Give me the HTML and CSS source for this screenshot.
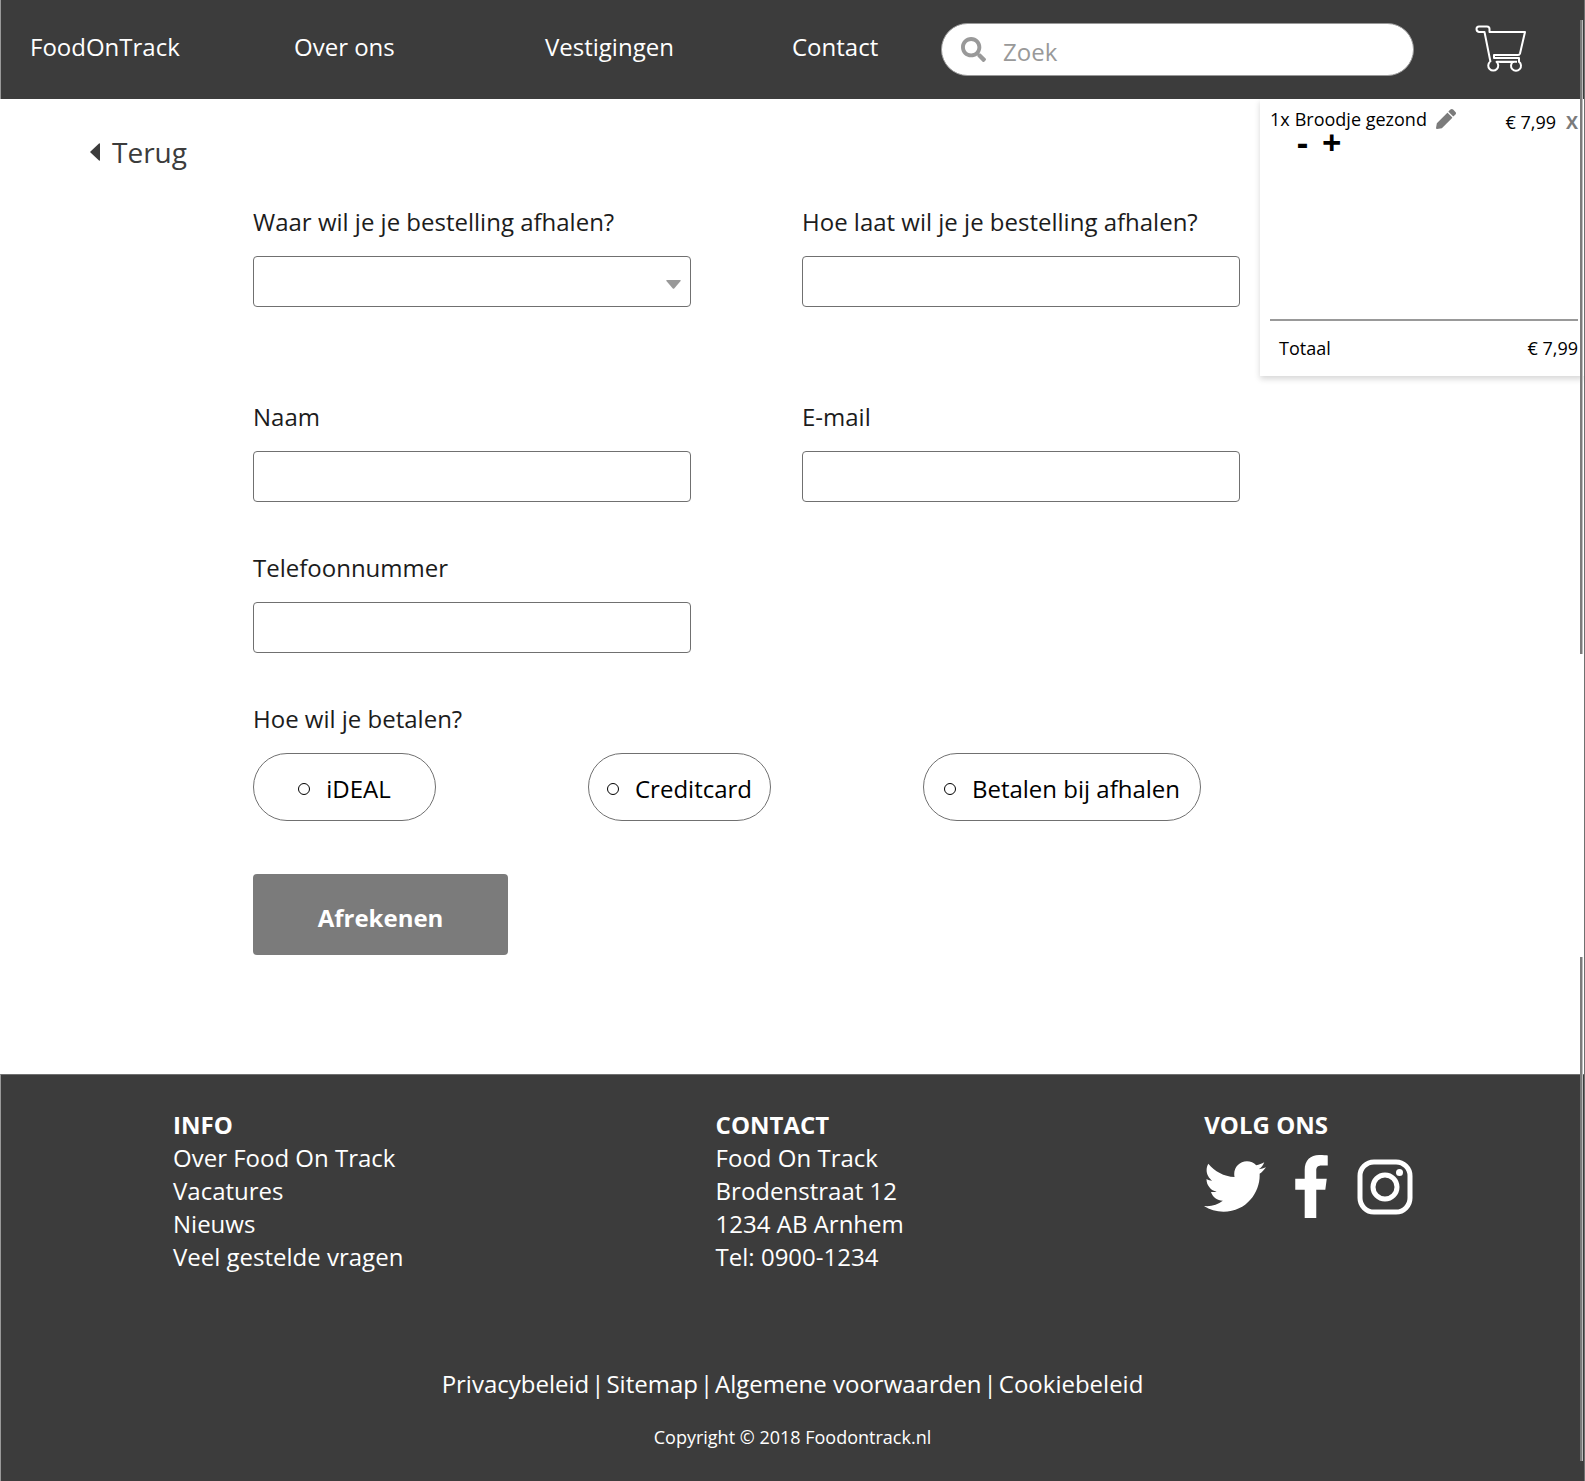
FILE: index.html
```html
<!DOCTYPE html>
<html lang="nl">
<head>
  <meta charset="utf-8">
  <meta name="viewport" content="width=device-width, initial-scale=1">
  <title>FoodOnTrack</title>
  <link rel="stylesheet" href="styles.css">
</head>
<body>
  <div class="page">
    <header class="header">
      <nav class="nav" aria-label="Hoofdmenu">
        <a href="#">FoodOnTrack</a>
        <a href="#">Over ons</a>
        <a href="#">Vestigingen</a>
        <a href="#">Contact</a>
      </nav>
      <form class="search" role="search">
        <svg class="search-icon" viewBox="0 0 512 512" aria-hidden="true"><path d="M505 442.700L405.300 343c-4.500-4.500-10.600-7-17-7H372c27.600-35.300 44-79.700 44-128C416 93.100 322.900 0 208 0S0 93.100 0 208s93.100 208 208 208c48.300 0 92.700-16.400 128-44v16.300c0 6.400 2.500 12.500 7 17l99.700 99.700c9.400 9.400 24.600 9.400 33.900 0l28.300-28.300c9.400-9.400 9.400-24.600.1-34zM208 336c-70.700 0-128-57.200-128-128 0-70.700 57.200-128 128-128 70.700 0 128 57.200 128 128 0 70.700-57.200 128-128 128z"/></svg>
        <input type="search" placeholder="Zoek" aria-label="Zoek">
      </form>
      <a class="cart-link" href="#" aria-label="Winkelwagen">
        <svg viewBox="0 0 52 47" aria-hidden="true"><path d="M4 1.500h8q2.500 0 2.500 2.500v3H50l-5 21.500q-.4 1.500-2 1.500H19v3h25v4.500M14.500 7M4 1.500q-2.500 0-2.500 2.500t2.500 3h5.500L15.500 37M24.500 37h14.500"/><path d="M15 36.800a5 5 0 1 0 6.500 0h20.500M38 36.800a5 5 0 1 0 6 0"/></svg>
      </a>
    </header>

    <main class="main">
      <div class="checkout">
        <a class="back" href="#"><svg viewBox="0 0 10 18" aria-hidden="true"><path d="M9 .5q1-.6 1 .8v15.400q0 1.400-1 .8L.5 9.600q-.7-.6 0-1.200z"/></svg>Terug</a>
        <form class="order">
          <div class="fields">
            <div class="field">
              <label for="plaats">Waar wil je je bestelling afhalen?</label>
              <div class="select">
                <select id="plaats"><option></option></select>
                <svg viewBox="0 0 15 9" aria-hidden="true"><path d="M1 0h13q1.400 0 .6 1L8.200 8.500q-.7.700-1.400 0L.4 1Q-.4 0 1 0z"/></svg>
              </div>
            </div>
            <div class="field">
              <label for="tijd">Hoe laat wil je je bestelling afhalen?</label>
              <input id="tijd" type="text">
            </div>
          </div>
          <div class="fields person">
            <div class="field">
              <label for="naam">Naam</label>
              <input id="naam" type="text">
            </div>
            <div class="field">
              <label for="email">E-mail</label>
              <input id="email" type="email">
            </div>
            <div class="field">
              <label for="telefoon">Telefoonnummer</label>
              <input id="telefoon" type="tel">
            </div>
          </div>
          <fieldset class="payment">
            <legend>Hoe wil je betalen?</legend>
            <div class="options">
              <label class="option"><input type="radio" name="betaling">iDEAL</label>
              <label class="option"><input type="radio" name="betaling">Creditcard</label>
              <label class="option wide"><input type="radio" name="betaling">Betalen bij afhalen</label>
            </div>
          </fieldset>
          <button class="submit" type="submit">Afrekenen</button>
        </form>
      </div>

      <aside class="basket" aria-label="Bestelling">
        <div class="item">
          <span class="amount">1x</span>
          <span class="name">Broodje gezond</span>
          <button class="edit" type="button" aria-label="Wijzigen"><svg viewBox="0 0 512 512" aria-hidden="true"><path d="M497.900 142.100l-46.100 46.100c-4.700 4.700-12.300 4.700-17 0l-111-111c-4.700-4.700-4.700-12.300 0-17l46.100-46.100c18.700-18.700 49.100-18.700 67.900 0l60.100 60.100c18.800 18.700 18.800 49.100 0 67.900zM284.200 99.800L21.600 362.400.4 483.900c-2.900 16.400 11.400 30.600 27.800 27.800l121.500-21.300 262.600-262.600c4.700-4.700 4.700-12.300 0-17l-111-111c-4.800-4.700-12.400-4.700-17.100 0z"/></svg></button>
          <span class="price">€ 7,99</span>
          <button class="remove" type="button" aria-label="Verwijderen">X</button>
        </div>
        <div class="quantity">
          <button type="button" aria-label="Minder">-</button>
          <button type="button" aria-label="Meer">+</button>
        </div>
        <div class="total"><span>Totaal</span><span>€ 7,99</span></div>
      </aside>
    </main>

    <footer class="footer">
      <div class="columns">
        <section>
          <h2>INFO</h2>
          <a href="#">Over Food On Track</a>
          <a href="#">Vacatures</a>
          <a href="#">Nieuws</a>
          <a href="#">Veel gestelde vragen</a>
        </section>
        <section>
          <h2>CONTACT</h2>
          <p>Food On Track</p>
          <p>Brodenstraat 12</p>
          <p>1234 AB Arnhem</p>
          <p>Tel: 0900-1234</p>
        </section>
        <section>
          <h2>VOLG ONS</h2>
          <div class="social">
            <a href="#" aria-label="Twitter"><svg class="twitter" viewBox="0 48 512 416" aria-hidden="true"><path d="M459.370 151.716c.325 4.548.325 9.097.325 13.645 0 138.720-105.583 298.558-298.558 298.558-59.452 0-114.680-17.219-161.137-47.106 8.447.974 16.568 1.299 25.340 1.299 49.055 0 94.213-16.568 130.274-44.832-46.132-.975-84.792-31.188-98.112-72.772 6.498.974 12.995 1.624 19.818 1.624 9.421 0 18.843-1.300 27.614-3.573-48.081-9.747-84.143-51.980-84.143-102.985v-1.299c13.969 7.797 30.214 12.670 47.431 13.319-28.264-18.843-46.781-51.005-46.781-87.391 0-19.492 5.197-37.360 14.294-52.954 51.655 63.675 129.300 105.258 216.365 109.807-1.624-7.797-2.599-15.918-2.599-24.040 0-57.828 46.782-104.934 104.934-104.934 30.213 0 57.502 12.670 76.670 33.137 23.715-4.548 46.456-13.320 66.599-25.340-7.798 24.366-24.366 44.833-46.132 57.827 21.117-2.273 41.584-8.122 60.426-16.243-14.292 20.791-32.161 39.308-52.628 54.253z"/></svg></a>
            <a href="#" aria-label="Facebook"><svg class="facebook" viewBox="0 0 264 512" aria-hidden="true"><path d="M76.700 512V283H0v-91h76.700v-71.700C76.700 42.400 124.300 0 193.800 0c33.300 0 61.900 2.500 70.200 3.600V85h-48.200c-37.800 0-45.100 18-45.100 44.300V192H256l-11.700 91h-73.600v229"/></svg></a>
            <a href="#" aria-label="Instagram"><svg class="instagram" viewBox="0 0 56 56" aria-hidden="true"><rect x="3" y="3" width="50" height="50" rx="14"/><circle cx="28" cy="28" r="12"/><circle class="dot" cx="42.500" cy="13.500" r="3.500"/></svg></a>
          </div>
        </section>
      </div>
      <p class="legal"><a href="#">Privacybeleid</a><span>|</span><a href="#">Sitemap</a><span>|</span><a href="#">Algemene voorwaarden</a><span>|</span><a href="#">Cookiebeleid</a></p>
      <p class="copyright">Copyright © 2018 Foodontrack.nl</p>
    </footer>
    <div class="rail" aria-hidden="true"><span></span><span></span></div>
  </div>
</body>
</html>
```

FILE: styles.css
```css
* {
  box-sizing: border-box;
}

body {
  margin: 0;
  background: #fff;
  color: #000;
  font: 24px/33px "Open Sans", "Noto Sans", sans-serif;
}

a {
  color: inherit;
  text-decoration: none;
}

button,
input,
select {
  font: inherit;
  color: inherit;
}

button {
  padding: 0;
  border: 0;
  background: none;
}

h2,
p {
  margin: 0;
}

svg {
  display: block;
}

.page {
  position: relative;
  display: flex;
  flex-direction: column;
  min-height: 100vh;
  border-right: 1px solid #707070;
}

/* Header */
.header {
  display: grid;
  grid-template-columns: minmax(0, 911fr) minmax(0, 473fr) minmax(0, 170fr);
  align-items: center;
  height: 99px;
  padding-left: 29px;
  border-left: 1px solid #999;
  background: #3c3c3c;
  color: #fff;
}

.nav {
  display: grid;
  grid-template-columns: 264fr 251fr 247fr 149fr;
  padding-bottom: 6px;
}

.search {
  display: flex;
  align-items: center;
  gap: 17px;
  height: 53px;
  padding: 0 19px;
  border: 1px solid #999;
  border-radius: 27px;
  background: #fff;
  color: #999;
}

.search-icon {
  flex: none;
  width: 25px;
  height: 25px;
  fill: currentColor;
}

.search input {
  flex: 1;
  min-width: 0;
  padding: 4px 0 0;
  border: 0;
  background: none;
}

.search input::placeholder {
  color: #999;
  opacity: 1;
}

.cart-link {
  justify-self: center;
  margin-left: 4px;
  padding-bottom: 3px;
}

.cart-link svg {
  width: 52px;
  height: 47px;
  fill: none;
  stroke: #fff;
  stroke-width: 2;
  stroke-linejoin: round;
}

/* Checkout */
.main {
  display: flex;
  flex: 1;
  align-items: flex-start;
  gap: 20px;
}

.checkout {
  flex: 1;
  padding: 33px 0 112px;
}

.back {
  display: inline-flex;
  align-items: center;
  gap: 12px;
  margin-left: 90px;
  color: #3c3c3c;
  font-size: 28px;
  line-height: 40px;
}

.back svg {
  width: 10px;
  height: 18px;
  fill: currentColor;
}

.order {
  margin: 33px 0 0 253px;
}

.fields {
  display: grid;
  grid-template-columns: 1fr 1fr;
  gap: 49px 111px;
}

.person {
  margin: 93px 0 49px;
}

.field label,
.payment legend {
  display: block;
  padding: 0;
  margin-bottom: 18px;
  color: #1c1c1c;
  white-space: nowrap;
}

.field input,
.field select {
  display: block;
  width: 100%;
  height: 51px;
  padding: 0 12px;
  border: 1px solid #707070;
  border-radius: 4px;
  background: #fff;
  appearance: none;
}

.select {
  display: grid;
  align-items: center;
}

.select > * {
  grid-area: 1 / 1;
}

.select svg {
  justify-self: end;
  width: 15px;
  height: 9px;
  margin: 5px 10px 0 0;
  fill: #999;
  pointer-events: none;
}

.payment {
  min-width: 0;
  margin: 0;
  padding: 0;
  border: 0;
}

.options {
  display: flex;
  justify-content: space-between;
  padding-right: 39px;
}

.option {
  display: flex;
  align-items: center;
  justify-content: center;
  gap: 16px;
  width: 183px;
  height: 68px;
  padding-top: 3px;
  border: 1px solid #707070;
  border-radius: 34px;
}

.option.wide {
  width: 278px;
}

.option input {
  flex: none;
  width: 12px;
  height: 12px;
  margin: 0;
  border: 1px solid #000;
  border-radius: 50%;
  appearance: none;
}

.option input:checked {
  background: #000;
}

.submit {
  width: 255px;
  height: 81px;
  margin-top: 53px;
  padding-top: 5px;
  border-radius: 4px;
  background: #7b7b7b;
  color: #fff;
  font-weight: 700;
}

/* Basket */
.basket {
  display: flex;
  flex: none;
  flex-direction: column;
  width: 324px;
  min-height: 277px;
  padding: 8px 6px 16px 10px;
  background: #fff;
  box-shadow: 0 3px 6px rgba(0, 0, 0, 0.16);
  clip-path: inset(0 0 -12px -12px);
  font-size: 18px;
  line-height: 24px;
}

.item {
  display: flex;
  align-items: flex-start;
}

.name {
  margin: 0 9px 0 5px;
}

.edit {
  margin-top: 2px;
}

.edit svg {
  width: 20px;
  height: 20px;
  fill: #7b7b7b;
}

.price {
  margin: 3px 10px 0 auto;
}

.remove {
  margin-top: 3px;
  color: #7b7b7b;
  font-weight: 700;
}

.quantity {
  display: flex;
  gap: 14px;
  margin-left: 27px;
  font-size: 34px;
  font-weight: 700;
}

.quantity button {
  line-height: 16px;
}

.total {
  display: flex;
  justify-content: space-between;
  margin-top: auto;
  padding: 15px 0 0 9px;
  border-top: 2px solid #999;
}

/* Footer */
.footer {
  padding: 33px 0 29px;
  border-top: 1px solid #707070;
  border-left: 1px solid #999;
  background: #3c3c3c;
  color: #fff;
}

.columns {
  display: grid;
  grid-template-columns: 543fr 489fr 380fr;
  padding-left: 172px;
}

.columns h2 {
  font-size: 24px;
  line-height: 33px;
}

.columns section > a {
  display: block;
}

.social {
  display: flex;
  align-items: center;
  gap: 29px;
  margin-top: 14px;
}

.social svg {
  fill: #fff;
}

.twitter {
  width: 62px;
  height: 51px;
}

.facebook {
  width: 33px;
  height: 63px;
}

.social .instagram {
  width: 56px;
  height: 56px;
  fill: none;
  stroke: #fff;
  stroke-width: 5;
}

.instagram .dot {
  fill: #fff;
  stroke: none;
}

.legal {
  display: flex;
  flex-wrap: wrap;
  justify-content: center;
  gap: 2px;
  margin-top: 94px;
}

.copyright {
  margin-top: 22px;
  font-size: 18px;
  line-height: 30px;
  text-align: center;
}

/* Thin rail laid over the right edge of the page */
.rail {
  position: absolute;
  inset: 20px 1px 20px auto;
  display: flex;
  flex-direction: column;
  justify-content: space-between;
  width: 3px;
  pointer-events: none;
}

.rail span {
  height: 44%;
  border-right: 1px solid #bbb;
  background: #7b7b7b;
}

.rail span:last-child {
  height: 35%;
}
```
